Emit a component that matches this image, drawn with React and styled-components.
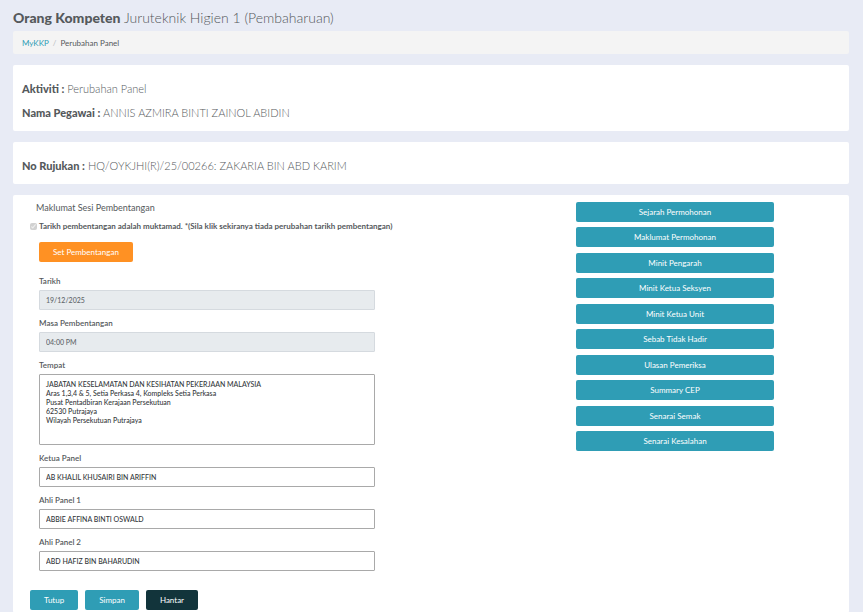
import React from "react";
import styled, { createGlobalStyle } from "styled-components";

const GlobalStyle = createGlobalStyle`
  *, *::before, *::after { box-sizing: border-box; }
  body {
    margin: 0;
    background: #e8ebf5;
    color: #55595c;
    font-family: Lato, "Liberation Sans", sans-serif;
    font-size: 8px;
  }
  h1, h2, p { margin: 0; }
  button, input, textarea { font-family: inherit; }
`;

const Page = styled.main`
  min-height: 100vh;
  padding: 7px 14px 0 13px;
  display: flex;
  flex-direction: column;
`;

const Title = styled.h1`
  font-size: 14px;
  line-height: 22px;
  font-weight: 300;
  margin-bottom: 2px;
  strong { font-weight: 900; }
`;

const Breadcrumb = styled.nav`
  display: flex;
  align-items: center;
  height: 23px;
  padding: 0 9px;
  margin-bottom: 11px;
  border-radius: 2px;
  background: #f4f4f4;
  font-size: 8px;
`;

const Crumb = styled.a`
  color: #2f9db5;
  text-decoration: none;
`;

const Slash = styled.span`
  padding: 0 4px;
  color: #b9bdc2;
`;

const Card = styled.section`
  background: #fff;
  border-radius: 2px;
  margin-bottom: 11px;
`;

const InfoCard = styled(Card)`
  padding: 12px 9px 6px;
`;

const InfoLine = styled.p`
  font-size: 11px;
  line-height: 24px;
  font-weight: 300;
  strong { font-weight: 900; }
`;

const MainCard = styled(Card)`
  flex: 1;
  margin-bottom: 0;
  padding: 7px 0 3px;
  display: grid;
  grid-template-columns: minmax(0, 362fr) minmax(0, 201fr) minmax(0, 198fr) minmax(0, 75fr);
`;

const Form = styled.form`
  grid-column: 1;
  padding-left: 26px;
`;

const Heading = styled.h2`
  margin-left: -3px;
  font-size: 9px;
  line-height: 12px;
  font-weight: 400;
`;

const CheckLine = styled.label`
  display: flex;
  align-items: center;
  gap: 2px;
  height: 12px;
  margin: 6px 0 10px -9px;
  font-weight: 700;
  white-space: nowrap;
`;

const CheckBox = styled.input`
  width: 7px;
  height: 7px;
  margin: 0;
  flex: none;
`;

const colours = { primary: "#2f9db5", warning: "#ff9123", dark: "#12343b" };

const Button = styled.button`
  height: 20px;
  padding: 0 14px;
  border: 0;
  border-radius: 2px;
  background: ${(p) => colours[p.$tone || "primary"]};
  color: #fff;
  font-size: 8px;
  line-height: 12px;
  cursor: pointer;
`;

const Field = styled.div`
  margin-bottom: 7px;
`;

const FirstField = styled(Field)`
  margin-top: 13px;
`;

const Label = styled.label`
  display: block;
  height: 15px;
  font-size: 8px;
  line-height: 12px;
  font-weight: 600;
`;

const TextInput = styled.input`
  display: block;
  width: 100%;
  height: 20px;
  padding: 0 6px;
  border: 1px solid #a9a9a9;
  border-radius: 1px;
  background: #fff;
  color: #33373a;
  font-size: 7px;
  font-weight: 500;
  &:disabled {
    background: #e7ebee;
    border-color: #d5dadf;
    color: #62676b;
  }
`;

const TextArea = styled.textarea`
  display: block;
  width: 100%;
  height: 71px;
  padding: 5px 6px;
  border: 1px solid #a9a9a9;
  border-radius: 1px;
  background: #fff;
  color: #33373a;
  font-size: 7px;
  font-weight: 500;
  line-height: 9px;
  resize: none;
`;

const Actions = styled.div`
  display: flex;
  gap: 7px;
  margin: 19px 0 0 -9px;
`;

const SideMenu = styled.nav`
  grid-column: 3;
  min-height: 249px;
  align-self: start;
  display: flex;
  flex-direction: column;
  justify-content: space-between;
`;

const address = `JABATAN KESELAMATAN DAN KESIHATAN PEKERJAAN MALAYSIA
Aras 1,3,4 & 5, Setia Perkasa 4, Kompleks Setia Perkasa
Pusat Pentadbiran Kerajaan Persekutuan
62530 Putrajaya
Wilayah Persekutuan Putrajaya`;

const members = [
  ["ketua", "Ketua Panel", "AB KHALIL KHUSAIRI BIN ARIFFIN"],
  ["ahli1", "Ahli Panel 1", "ABBIE AFFINA BINTI OSWALD"],
  ["ahli2", "Ahli Panel 2", "ABD HAFIZ BIN BAHARUDIN"],
];

const menu = [
  "Sejarah Permohonan",
  "Maklumat Permohonan",
  "Minit Pengarah",
  "Minit Ketua Seksyen",
  "Minit Ketua Unit",
  "Sebab Tidak Hadir",
  "Ulasan Pemeriksa",
  "Summary CEP",
  "Senarai Semak",
  "Senarai Kesalahan",
];

export default function App() {
  return (
    <>
      <GlobalStyle />
      <Page>
        <Title>
          <strong>Orang Kompeten</strong> Juruteknik Higien 1 (Pembaharuan)
        </Title>
        <Breadcrumb>
          <Crumb href="#">MyKKP</Crumb>
          <Slash>/</Slash>
          <span>Perubahan Panel</span>
        </Breadcrumb>
        <InfoCard>
          <InfoLine><strong>Aktiviti :</strong> Perubahan Panel</InfoLine>
          <InfoLine><strong>Nama Pegawai :</strong> ANNIS AZMIRA BINTI ZAINOL ABIDIN</InfoLine>
        </InfoCard>
        <InfoCard>
          <InfoLine><strong>No Rujukan :</strong> HQ/OYKJHI(R)/25/00266: ZAKARIA BIN ABD KARIM</InfoLine>
        </InfoCard>
        <MainCard>
          <Form onSubmit={(e) => e.preventDefault()}>
            <Heading>Maklumat Sesi Pembentangan</Heading>
            <CheckLine>
              <CheckBox type="checkbox" defaultChecked disabled />
              Tarikh pembentangan adalah muktamad. *(Sila klik sekiranya tiada perubahan tarikh pembentangan)
            </CheckLine>
            <Button type="button" $tone="warning">Set Pembentangan</Button>
            <FirstField>
              <Label htmlFor="tarikh">Tarikh</Label>
              <TextInput id="tarikh" defaultValue="19/12/2025" disabled />
            </FirstField>
            <Field>
              <Label htmlFor="masa">Masa Pembentangan</Label>
              <TextInput id="masa" defaultValue="04:00 PM" disabled />
            </Field>
            <Field>
              <Label htmlFor="tempat">Tempat</Label>
              <TextArea id="tempat" defaultValue={address} />
            </Field>
            {members.map(([id, label, value]) => (
              <Field key={id}>
                <Label htmlFor={id}>{label}</Label>
                <TextInput id={id} defaultValue={value} />
              </Field>
            ))}
            <Actions>
              <Button type="button">Tutup</Button>
              <Button type="button">Simpan</Button>
              <Button type="submit" $tone="dark">Hantar</Button>
            </Actions>
          </Form>
          <SideMenu>
            {menu.map((item) => (
              <Button type="button" key={item}>{item}</Button>
            ))}
          </SideMenu>
        </MainCard>
      </Page>
    </>
  );
}
